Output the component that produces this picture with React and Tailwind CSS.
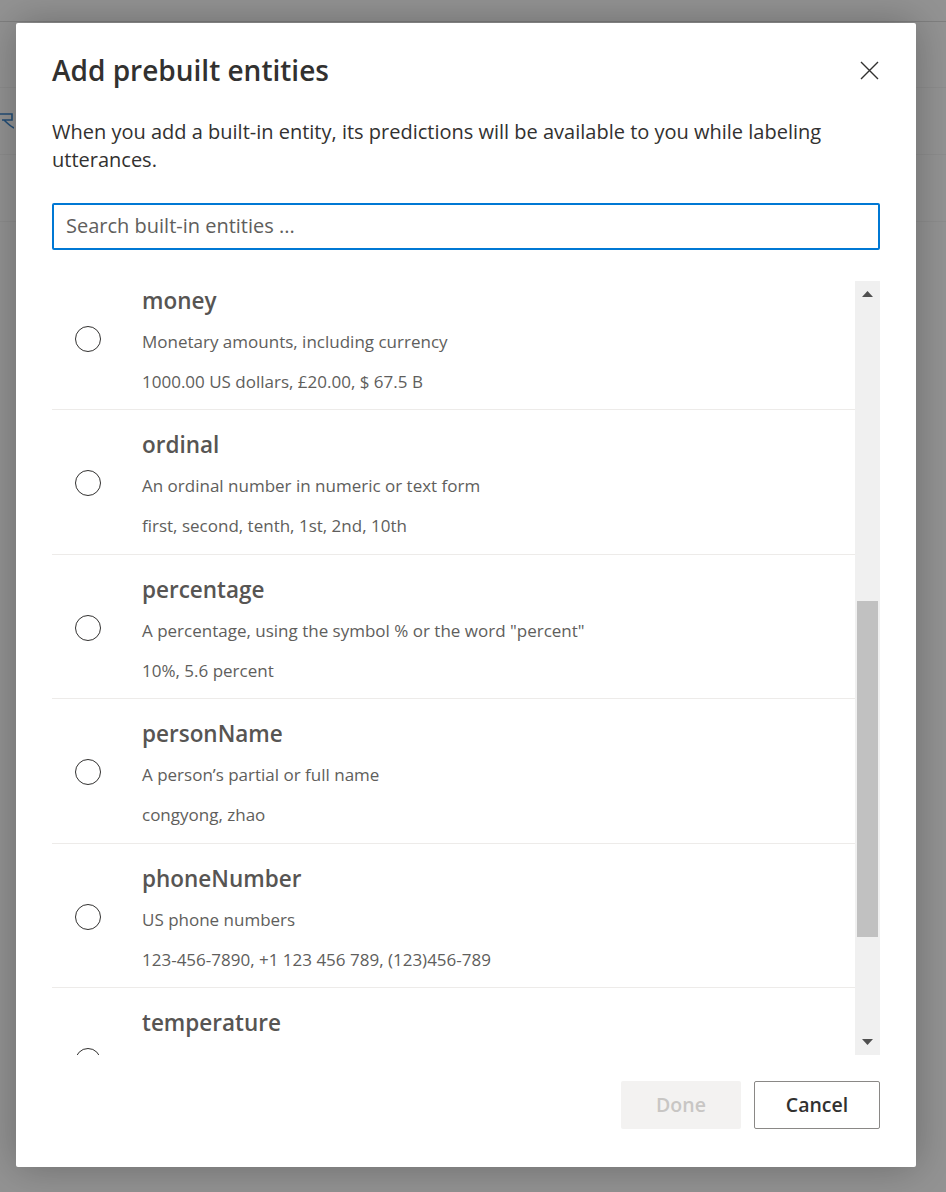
import React from "react";

const entities = [
  {
    name: "money",
    desc: "Monetary amounts, including currency",
    example: "1000.00 US dollars, £20.00, $ 67.5 B",
  },
  {
    name: "ordinal",
    desc: "An ordinal number in numeric or text form",
    example: "first, second, tenth, 1st, 2nd, 10th",
  },
  {
    name: "percentage",
    desc: 'A percentage, using the symbol % or the word "percent"',
    example: "10%, 5.6 percent",
  },
  {
    name: "personName",
    desc: "A person’s partial or full name",
    example: "congyong, zhao",
  },
  {
    name: "phoneNumber",
    desc: "US phone numbers",
    example: "123-456-7890, +1 123 456 789, (123)456-789",
  },
  {
    name: "temperature",
    desc: "Temperature measured in degrees of heat or cold",
    example: "32 F, 12 degrees Celsius, 2 deg C",
  },
];

const font = "font-['Segoe_UI','Open_Sans',sans-serif]";

function EntityRow({ entity }) {
  return (
    <div className="flex h-[144.5px] shrink-0 items-center border-b border-[#edebe9]">
      <div className="flex w-[90px] shrink-0 pl-[23px] pt-[2px]">
        <span className="block h-[26px] w-[26px] rounded-full border-[1.5px] border-[#323130]" />
      </div>
      <div className="flex h-full flex-col pt-[20px]">
        <div className="text-[22.5px] leading-[30px] font-semibold text-[#575553]">
          {entity.name}
        </div>
        <div className="mt-[14px] text-[17px] leading-[24px] text-[#605e5c]">
          {entity.desc}
        </div>
        <div className="mt-[16px] text-[17px] leading-[24px] text-[#605e5c]">
          {entity.example}
        </div>
      </div>
    </div>
  );
}

function Scrollbar() {
  return (
    <div className="flex w-[25px] shrink-0 flex-col items-center bg-[#f0f0f0]">
      <div className="flex h-[24px] items-center justify-center pt-[2px]">
        <svg width="11" height="6" viewBox="0 0 11 6">
          <path d="M5.5 0 L11 6 L0 6 Z" fill="#505050" />
        </svg>
      </div>
      <div className="h-[296px]" />
      <div className="h-[336px] w-[21px] bg-[#c1c1c1]" />
      <div className="flex-1" />
      <div className="flex h-[24px] items-center justify-center pb-[2px]">
        <svg width="11" height="6" viewBox="0 0 11 6">
          <path d="M0 0 L11 0 L5.5 6 Z" fill="#505050" />
        </svg>
      </div>
    </div>
  );
}

export default function App() {
  return (
    <div className={`relative h-[1192px] w-[946px] overflow-hidden bg-[#939393] ${font}`}>
      {/* dimmed page behind the modal */}
      <div className="flex flex-col">
        <div className="h-[22px] border-b border-[#7f7f7f]" />
        <div className="h-[66px] border-b border-[#8d8d8d]" />
        <div className="flex h-[67px] items-center border-b border-[#8d8d8d]">
          <svg width="16" height="20" viewBox="0 0 16 20" className="-ml-[2px]">
            <path
              d="M0 3 H14 V9 H4 M6 9 C9 12 12 15 16 17"
              stroke="#234e77"
              strokeWidth="1.6"
              fill="none"
            />
          </svg>
        </div>
        <div className="h-[67px] border-b border-[#8d8d8d]" />
      </div>

      {/* modal */}
      <div className="absolute left-[16px] top-[23px] flex h-[1144px] w-[900px] flex-col rounded-[2px] bg-white px-[36px] pt-[27px] pb-[38px] shadow-[0_0_40px_rgba(0,0,0,0.28)]">
        <div className="flex h-[40px] items-center justify-between">
          <h1 className="text-[28px] leading-[40px] font-semibold text-[#323130]">
            Add prebuilt entities
          </h1>
          <button className="-mr-[1px] flex h-[24px] w-[24px] items-center justify-center">
            <svg width="19" height="19" viewBox="0 0 19 19">
              <path d="M1 1 L18 18 M18 1 L1 18" stroke="#323130" strokeWidth="1.4" />
            </svg>
          </button>
        </div>

        <p className="mt-[28px] text-[20px] leading-[28px] text-[#323130]">
          When you add a built-in entity, its predictions will be available to you while labeling
          utterances.
        </p>

        <div className="mt-[29px] flex h-[47px] items-center rounded-[2px] border-2 border-[#0078d4] px-[12px]">
          <input
            className="w-full bg-transparent text-[20px] text-[#323130] outline-none placeholder:text-[#605e5c]"
            placeholder="Search built-in entities ..."
          />
        </div>

        <div className="mt-[31px] flex h-[776px] overflow-hidden">
          <div className="flex flex-1 flex-col overflow-hidden">
            <div className="-mt-[15px] flex flex-col">
              {entities.map((e) => (
                <EntityRow key={e.name} entity={e} />
              ))}
            </div>
          </div>
          <Scrollbar />
        </div>

        <div className="mt-[26px] flex justify-end gap-[13px]">
          <button className="h-[48px] w-[120px] rounded-[2px] bg-[#f3f2f1] text-[19.5px] font-semibold text-[#c8c6c4]">
            Done
          </button>
          <button className="h-[48px] w-[126px] rounded-[2px] border border-[#8a8886] bg-white text-[19.5px] font-semibold text-[#323130]">
            Cancel
          </button>
        </div>
      </div>
    </div>
  );
}
